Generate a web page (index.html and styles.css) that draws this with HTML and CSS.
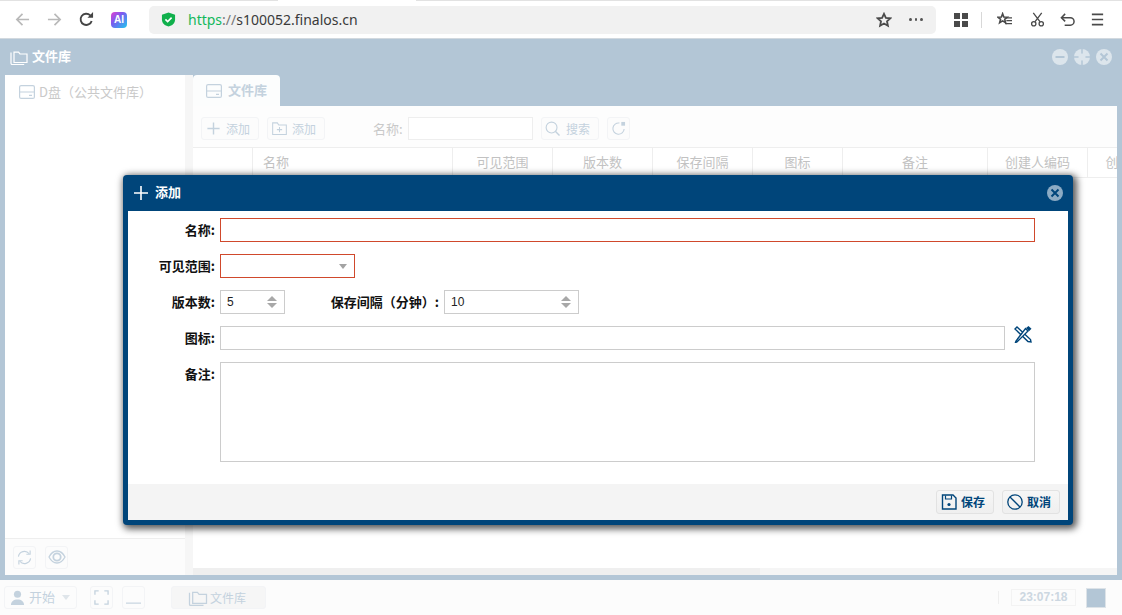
FILE: index.html
```html
<!DOCTYPE html>
<html lang="zh">
<head>
<meta charset="utf-8">
<title>文件库</title>
<link rel="stylesheet" href="styles.css">
</head>
<body>
<div class="page">
  <header class="browser">
    <div class="topline"><i class="tl-a"></i><i class="tl-b"></i></div>
    <div class="browser-row">
      <svg class="bi back" viewBox="0 0 16 16"><path d="M15 8H2M8 2 2 8l6 6" fill="none" stroke="#b9b9b9" stroke-width="1.800"/></svg>
      <svg class="bi fwd" viewBox="0 0 16 16"><path d="M1 8h13M8 2l6 6-6 6" fill="none" stroke="#b9b9b9" stroke-width="1.800"/></svg>
      <svg class="bi reload" viewBox="0 0 16 16"><path d="M13.500 9.500A6 6 0 1 1 12 3.600" fill="none" stroke="#444" stroke-width="2"/><path d="M9 6h6V0z" fill="#444"/></svg>
      <div class="ai">AI</div>
      <div class="address">
        <svg class="shield" viewBox="0 0 16 16"><path d="M8 .5 15 3v5c0 4-3 6.500-7 7.500C4 14.500 1 12 1 8V3z" fill="#10b04c"/><path d="m4.700 7.800 2.400 2.400 4.200-4.200" fill="none" stroke="#fff" stroke-width="1.700"/></svg>
        <span class="url"><span class="url-s">https</span><span class="url-c">://</span>s100052.finalos.cn</span>
        <svg class="star" viewBox="0 0 16 16"><path d="m8 1.800 1.900 4 4.400.5-3.300 3 .9 4.400L8 11.500l-3.900 2.200.9-4.400-3.300-3 4.400-.5z" fill="none" stroke="#4a4a4a" stroke-width="1.800"/></svg>
        <span class="dots"><i></i><i></i><i></i></span>
      </div>
      <div class="tool-grid"><i></i><i></i><i></i><i></i></div>
      <span class="tool-sep"></span>
      <svg class="bi t1" viewBox="0 0 16 16"><path d="m6 1.800 1.300 3.500 3.700.2-2.800 2.300 1 3.600L6 9.500 2.800 11.400l1-3.600L1 5.500l3.700-.2z" fill="#fff" stroke="#4a4a4a" stroke-width="1.700"/><path d="M9.500 6.200H16M10 9.300h6M8.500 12.300H16" stroke="#4a4a4a" stroke-width="1.300"/></svg>
      <svg class="bi t2" viewBox="0 0 16 16"><circle cx="4" cy="12.500" r="2.300" fill="none" stroke="#4a4a4a" stroke-width="1.400"/><circle cx="12" cy="12.500" r="2.300" fill="none" stroke="#4a4a4a" stroke-width="1.400"/><path d="M5.200 10.500 12.500 1M10.800 10.500 3.500 1" stroke="#4a4a4a" stroke-width="1.400"/></svg>
      <svg class="bi t3" viewBox="0 0 16 16"><path d="M2 6h9a3.800 3.800 0 0 1 0 8H5" fill="none" stroke="#4a4a4a" stroke-width="1.600"/><path d="M5.500 2 1.500 6l4 4" fill="none" stroke="#4a4a4a" stroke-width="1.600"/></svg>
      <svg class="bi t4" viewBox="0 0 16 16"><path d="M2 2.500h12M2 8h12M2 13.500h12" stroke="#4a4a4a" stroke-width="1.700"/></svg>
    </div>
  </header>

  <section class="window">
    <div class="win-title">
      <svg class="title-icon" viewBox="0 0 18 16"><path d="M4 13.500V3.200h4.500l1.500 1.800h7v8.500zM1 3.500v10.800c0 .7.500 1.200 1.200 1.200h12" fill="none" stroke="#fff" stroke-width="1.200"/></svg>
      <span class="win-name">文件库</span>
      <span class="win-controls">
        <svg class="wc" viewBox="0 0 16 16"><circle cx="8" cy="8" r="8" fill="#dce5ec"/><path d="M3.500 8h9" stroke="#b3c6d6" stroke-width="2"/></svg>
        <svg class="wc" viewBox="0 0 16 16"><circle cx="8" cy="8" r="8" fill="#dce5ec"/><path d="M8 0v16M0 8h16" stroke="#b3c6d6" stroke-width="1.500"/><circle cx="8" cy="8" r="3.500" fill="#dce5ec"/></svg>
        <svg class="wc" viewBox="0 0 16 16"><circle cx="8" cy="8" r="8" fill="#dce5ec"/><path d="m4.500 4.500 7 7M11.500 4.500l-7 7" stroke="#b3c6d6" stroke-width="2"/></svg>
      </span>
    </div>
    <div class="win-body">
      <aside class="side">
        <div class="tree">
          <svg class="disk" viewBox="0 0 16 14"><rect x=".6" y=".6" width="14.800" height="12.800" rx="1.500" fill="none" stroke="#c4d2de" stroke-width="1.200"/><path d="M1 7h14M10 10.300h3" stroke="#c4d2de" stroke-width="1.200"/></svg>
          <span class="tree-text">D盘（公共文件库）</span>
        </div>
        <div class="side-foot">
          <span class="ghost-btn sq"><svg class="gi" viewBox="0 0 16 16"><path d="M1.500 7A6.500 6.500 0 0 1 13 4M14.500 9A6.500 6.500 0 0 1 3 12" fill="none" stroke="#c4d2de" stroke-width="1.200"/><path d="M10 4.500h4v-4M6 11.500H2v4" fill="none" stroke="#c4d2de" stroke-width="1.200"/></svg></span>
          <span class="ghost-btn sq"><svg class="gi wide" viewBox="0 0 18 14"><path d="M1 7c2-3.800 4.800-6 8-6s6 2.200 8 6c-2 3.800-4.800 6-8 6S3 10.800 1 7z" fill="none" stroke="#c4d2de" stroke-width="1.300"/><circle cx="9" cy="7" r="3.700" fill="none" stroke="#c4d2de" stroke-width="1.800"/></svg></span>
        </div>
      </aside>
      <div class="gutter"></div>
      <main class="main">
        <div class="tabs">
          <div class="tab">
            <svg class="disk" viewBox="0 0 16 14"><rect x=".6" y=".6" width="14.800" height="12.800" rx="1.500" fill="none" stroke="#c4d2de" stroke-width="1.200"/><path d="M1 7h14M10 10.300h3" stroke="#c4d2de" stroke-width="1.200"/></svg>
            <span class="tab-text">文件库</span>
          </div>
        </div>
        <div class="panel">
          <div class="toolbar">
            <span class="ghost-btn tb"><svg class="gi" viewBox="0 0 16 16"><path d="M8 1.500v13M1.500 8h13" stroke="#c4d2de" stroke-width="1.500"/></svg><span>添加</span></span>
            <span class="ghost-btn tb"><svg class="gi" viewBox="0 0 16 16"><path d="M.7 14.300V2h5l1.500 2.200h8.100v10.100zM8 6.500v5.500M5.200 9.200h5.600" fill="none" stroke="#c4d2de" stroke-width="1.100"/></svg><span>添加</span></span>
            <span class="q-label">名称:</span>
            <span class="q-input"></span>
            <span class="ghost-btn tb search"><svg class="gi" viewBox="0 0 16 16"><circle cx="7" cy="7" r="5.800" fill="none" stroke="#c4d2de" stroke-width="1.200"/><path d="m11 11 4.500 4.500" stroke="#c4d2de" stroke-width="1.500"/></svg><span>搜索</span></span>
            <span class="ghost-btn sq"><svg class="gi" viewBox="0 0 16 16"><path d="M14 8.500A6 6 0 1 1 9 2.200" fill="none" stroke="#c4d2de" stroke-width="1.200"/><path d="M11 1h4v4h-4z" fill="#c4d2de"/></svg></span>
          </div>
          <div class="thead">
            <span class="th"></span><span class="th th-left">名称</span><span class="th">可见范围</span><span class="th">版本数</span><span class="th">保存间隔</span><span class="th">图标</span><span class="th">备注</span><span class="th">创建人编码</span><span class="th">创建人</span>
          </div>
          <div class="tbody"></div>
          <div class="hscroll"><i></i></div>
        </div>
      </main>
    </div>
  </section>

  <footer class="taskbar">
    <span class="ghost-btn start">
      <svg class="user" viewBox="0 0 16 16"><circle cx="8" cy="4.500" r="3.800" fill="#c4d2de"/><path d="M1 16c0-4 3-6 7-6s7 2 7 6z" fill="#c4d2de"/></svg>
      <span class="start-text">开始</span><i class="caret-ghost"></i>
    </span>
    <span class="ghost-btn sq full"><svg class="gi" viewBox="0 0 16 16"><path d="M1 5V1h4M11 1h4v4M15 11v4h-4M5 15H1v-4" fill="none" stroke="#c4d2de" stroke-width="1.400"/></svg></span>
    <span class="ghost-btn sq"><svg class="gi" viewBox="0 0 16 16"><path d="M0 14h16" stroke="#c4d2de" stroke-width="1.200"/></svg></span>
    <span class="ghost-btn task">
      <svg class="task-icon" viewBox="0 0 18 16"><path d="M4 13.500V3.200h4.500l1.500 1.800h7v8.500zM1 3.500v10.800c0 .7.500 1.200 1.200 1.200h12" fill="none" stroke="#c4d2de" stroke-width="1.200"/></svg>
      <span class="task-text">文件库</span>
    </span>
    <span class="task-sep"></span>
    <span class="clock">23:07:18</span>
    <span class="color-box"></span>
  </footer>
</div>

<div class="dialog">
  <div class="dlg-title">
    <svg class="dlg-plus" viewBox="0 0 14 14"><path d="M7 0v14M0 7h14" stroke="#fff" stroke-width="1.600"/></svg>
    <span class="dlg-name">添加</span>
    <svg class="dlg-close" viewBox="0 0 16 16"><circle cx="8" cy="8" r="8" fill="#8cabc4"/><path d="m4.500 4.500 7 7M11.500 4.500l-7 7" stroke="#00457a" stroke-width="2"/></svg>
  </div>
  <div class="dlg-body">
    <div class="row">
      <label class="lbl">名称:</label>
      <span class="field req grow-name"></span>
    </div>
    <div class="row">
      <label class="lbl">可见范围:</label>
      <span class="field req select"><i class="caret"></i></span>
    </div>
    <div class="row">
      <label class="lbl">版本数:</label>
      <span class="field spin s1"><span class="val">5</span><span class="arrows"><i class="up"></i><i class="down"></i></span></span>
      <label class="lbl lbl2">保存间隔（分钟）:</label>
      <span class="field spin s2"><span class="val">10</span><span class="arrows"><i class="up"></i><i class="down"></i></span></span>
    </div>
    <div class="row">
      <label class="lbl">图标:</label>
      <span class="field icon-field"></span>
      <svg class="pen" viewBox="0 0 18 17"><path d="M1 3 3 1l13.500 12.500.5 2.500-3-.5z" fill="none" stroke="#00457a" stroke-width="1.400"/><path d="M2 15l-.5 1.500L3 16 14 5l-2.500-2.500z" fill="#fff" stroke="#00457a" stroke-width="1.400"/><path d="M12 2 14.500 0 17.500 2.800 15 5.300z" fill="#00457a"/></svg>
    </div>
    <div class="row row-area">
      <label class="lbl">备注:</label>
      <span class="field area"></span>
    </div>
  </div>
  <div class="dlg-foot">
    <span class="dlg-btn"><svg class="dbi" viewBox="0 0 16 16"><path d="M1.500 1h10.500l3 3v11H1.500z" fill="none" stroke="#00457a" stroke-width="1.400"/><path d="M4.500 1.500v3.500h6V1.500" fill="none" stroke="#00457a" stroke-width="1.200"/><circle cx="8" cy="10.500" r="1.600" fill="#00457a"/></svg><span class="btn-text">保存</span></span>
    <span class="dlg-btn"><svg class="dbi" viewBox="0 0 16 16"><circle cx="8" cy="8" r="7.200" fill="none" stroke="#00457a" stroke-width="1.300"/><path d="m3 3 10 10" stroke="#00457a" stroke-width="1.300"/></svg><span class="btn-text">取消</span></span>
  </div>
</div>
</body>
</html>
```
FILE: styles.css
```css
* { box-sizing: border-box; }
html, body { margin: 0; padding: 0; width: 1122px; height: 615px; overflow: hidden; background: #fff; }
body { font-family: "Noto Sans CJK SC", "Liberation Sans", sans-serif; font-size: 13px; position: relative; }
i { display: block; font-style: normal; }
svg { display: block; flex: none; }

.page { display: flex; flex-direction: column; width: 1122px; height: 615px; }

/* browser */
.browser { height: 39px; background: #fff; border-bottom: 1px solid #d2d9df; flex: none; }
.topline { display: flex; height: 1px; }
.tl-a { width: 278px; background: #e2e2e2; }
.tl-b { margin-left: 138px; flex: 1; background: #e2e2e2; }
.browser-row { display: flex; align-items: center; height: 37px; padding: 0 0 0 15px; }
.bi { width: 15px; height: 15px; }
.fwd { margin-left: 17px; }
.reload { margin-left: 17px; }
.ai { width: 16px; height: 16px; margin-left: 17px; border-radius: 4px; background: linear-gradient(135deg, #e23fd0 0%, #7a5cf0 40%, #1ec8ee 100%); color: #fff; font: 700 10px/16px "Liberation Sans", sans-serif; text-align: center; }
.address { display: flex; align-items: center; width: 787px; height: 28px; margin-left: 22px; padding: 0 13px 0 12px; border-radius: 5px; background: #f1f1f1; }
.shield { width: 15px; height: 15px; }
.url { margin-left: 12px; font: 14px/20px "Noto Sans", "Liberation Sans", sans-serif; color: #3a3a3a; }
.url-s { color: #12b85c; }
.url-c { color: #777; }
.star { width: 16px; height: 16px; margin-left: auto; }
.dots { display: flex; gap: 3px; width: 14px; margin-left: 17px; }
.dots i { width: 3px; height: 3px; background: #555; border-radius: 50%; }
.tool-grid { display: grid; grid-template-columns: 6px 6px; gap: 2px; margin-left: 18px; }
.tool-grid i { width: 6px; height: 6px; background: #4a4a4a; }
.tool-sep { width: 1px; height: 16px; margin-left: 13px; background: #d8d8d8; }
.t1 { margin-left: 15px; }
.t2 { margin-left: 18px; }
.t3 { margin-left: 15px; }
.t4 { margin-left: 15px; }

/* window */
.window { display: flex; flex-direction: column; height: 541px; background: #b3c6d6; padding: 0 5px 5px; flex: none; }
.win-title { display: flex; align-items: center; height: 36px; flex: none; }
.title-icon { width: 18px; height: 16px; margin-left: 5px; margin-bottom: 1px; }
.win-name { margin-left: 4px; padding-bottom: 3px; color: #fff; font-weight: 700; font-size: 13px; }
.win-controls { display: flex; gap: 6px; margin-left: auto; margin-right: 5px; }
.wc { width: 16px; height: 16px; }
.win-body { display: flex; flex: 1; min-height: 0; }

.side { display: flex; flex-direction: column; width: 180px; background: #fff; }
.tree { display: flex; align-items: center; height: 34px; padding: 0 0 0 14px; flex: none; }
.disk { width: 16px; height: 14px; }
.tree-text { margin-left: 4px; padding-bottom: 2px; color: #c9c9c9; font-size: 13px; }
.side-foot { display: flex; gap: 9px; align-items: center; margin-top: auto; height: 37px; padding-left: 8px; border-top: 1px solid #eee; background: #fcfcfc; }

.gutter { width: 8px; background: #f6f6f6; }

.main { display: flex; flex-direction: column; flex: 1; min-width: 0; }
.tabs { display: flex; height: 31px; flex: none; }
.tab { display: flex; align-items: center; gap: 6px; width: 87px; padding-left: 13px; background: #fcfdfd; border-radius: 4px 4px 0 0; color: #c4d2de; font-weight: 700; font-size: 13px; }
.tab-text { padding-bottom: 2px; }
.panel { display: flex; flex-direction: column; flex: 1; min-height: 0; background: #fff; position: relative; overflow: hidden; }
.toolbar { display: flex; align-items: center; height: 42px; padding: 3px 0 0 8px; background: #fdfdfd; border-bottom: 1px solid #eee; flex: none; }
.ghost-btn { display: inline-flex; align-items: center; border: 1px solid #f3f4f6; border-radius: 3px; background: #fcfcfc; color: #c4d2de; }
.ghost-btn.sq { justify-content: center; width: 23px; height: 23px; }
.ghost-btn.tb { gap: 5px; width: 58px; height: 23px; padding-left: 4px; margin-right: 8px; font-size: 12px; }
.gi { width: 15px; height: 15px; }
.gi.wide { width: 18px; height: 14px; }
.q-label { margin-left: 40px; width: 35px; color: #c9c9c9; font-size: 13px; }
.q-input { width: 125px; height: 23px; background: #fff; border: 1px solid #eee; }
.ghost-btn.search { gap: 6px; margin-left: 8px; padding-left: 3px; }

.thead { display: grid; grid-template-columns: 60px 200px 100px 100px 100px 90px 145px 100px 75px; height: 30px; flex: none; border-bottom: 1px solid #eee; overflow: hidden; }
.th { display: flex; align-items: center; justify-content: center; padding-bottom: 3px; color: #c2c2c2; font-size: 13px; border-right: 1px solid #eee; white-space: nowrap; overflow: hidden; }
.th-left { justify-content: flex-start; padding-left: 10px; }
.tbody { flex: 1; }
.hscroll { height: 7px; background: #f5f5f5; flex: none; }
.hscroll i { width: 567px; height: 7px; background: #efefef; }

/* taskbar */
.taskbar { display: flex; align-items: center; height: 35px; padding-left: 4px; background: #fcfcfc; flex: none; }
.start { gap: 4px; width: 73px; height: 23px; padding-left: 5px; font-size: 13px; }
.start-text { padding-bottom: 2px; }
.user { width: 15px; height: 17px; }
.caret-ghost { width: 0; height: 0; margin-left: 3px; border: 4px solid transparent; border-top: 5px solid #dfe5ea; border-bottom: 0; }
.full { margin-left: 13px; }
.full + .sq { margin-left: 9px; }
.task { justify-content: flex-start; gap: 2px; width: 95px; height: 23px; padding-left: 16px; margin-left: 26px; background: #f6f6f6; font-size: 12px; }
.task-text { padding-bottom: 1px; }
.task-icon { width: 20px; height: 17px; }
.task-sep { width: 1px; height: 13px; margin-left: 732px; background: #efefef; }
.clock { width: 65px; height: 17px; margin-left: 12px; border: 1px solid #f3f3f3; font: 700 12px/15px "Liberation Sans", sans-serif; color: #ccd7e1; text-align: center; }
.color-box { width: 20px; height: 20px; margin-left: 10px; background: #b3c6d6; border: 1px solid #dde3e8; }

/* dialog */
.dialog { position: absolute; left: 123px; top: 175px; width: 950px; height: 350px; display: flex; flex-direction: column; background: #00457a; border-radius: 4px; padding: 0 5px 5px; box-shadow: 2px 2px 7px 2px rgba(0,0,0,.65); }
.dlg-title { display: flex; align-items: center; height: 36px; flex: none; }
.dlg-plus { width: 14px; height: 14px; margin-left: 6px; }
.dlg-name { margin-left: 7px; padding-bottom: 3px; color: #fff; font-size: 13px; font-weight: 700; }
.dlg-close { width: 16px; height: 16px; margin-left: auto; margin-right: 5px; }
.dlg-body { display: flex; flex-direction: column; gap: 12px; flex: 1; padding-top: 7px; background: #fff; }
.row { display: flex; align-items: center; height: 24px; flex: none; }
.row-area { height: 100px; align-items: flex-start; }
.lbl { width: 87px; height: 24px; text-align: right; color: #111; font-weight: 700; font-size: 13px; line-height: 24px; flex: none; white-space: nowrap; }
.field { display: flex; align-items: center; height: 24px; margin-left: 5px; background: #fff; border: 1px solid #ccc; flex: none; }
.req { border-color: #d0492c; }
.grow-name { width: 815px; }
.select { width: 135px; position: relative; justify-content: flex-end; padding-right: 7px; }
.caret { width: 0; height: 0; border: 4px solid transparent; border-top: 5px solid #a3a3a3; border-bottom: 0; }
.spin { justify-content: space-between; padding: 0 6px; }
.s1 { width: 65px; }
.s2 { width: 135px; }
.val { color: #222; font: 12px/24px "Liberation Sans", sans-serif; }
.arrows { display: flex; flex-direction: column; gap: 2px; margin-right: 1px; }
.up { width: 0; height: 0; border: 5px solid transparent; border-bottom: 5px solid #a8a8a8; border-top: 0; }
.down { width: 0; height: 0; border: 5px solid transparent; border-top: 5px solid #a8a8a8; border-bottom: 0; }
.lbl2 { width: 154px; margin-left: 0; }
.icon-field { width: 785px; }
.pen { width: 18px; height: 17px; margin-left: 9px; margin-top: -7px; }
.area { height: 100px; width: 815px; }
.dlg-foot { display: flex; justify-content: flex-end; align-items: center; gap: 8px; height: 36px; padding-right: 8px; background: #f4f4f4; flex: none; }
.dlg-btn { display: inline-flex; align-items: center; gap: 4px; width: 58px; height: 24px; padding-left: 4px; border: 1px solid #e2e2e2; border-radius: 3px; background: linear-gradient(#f6f6f6, #efefef); color: #00457a; font-size: 12px; font-weight: 700; }
.btn-text { padding-bottom: 2px; }
.dbi { width: 16px; height: 16px; }
```
